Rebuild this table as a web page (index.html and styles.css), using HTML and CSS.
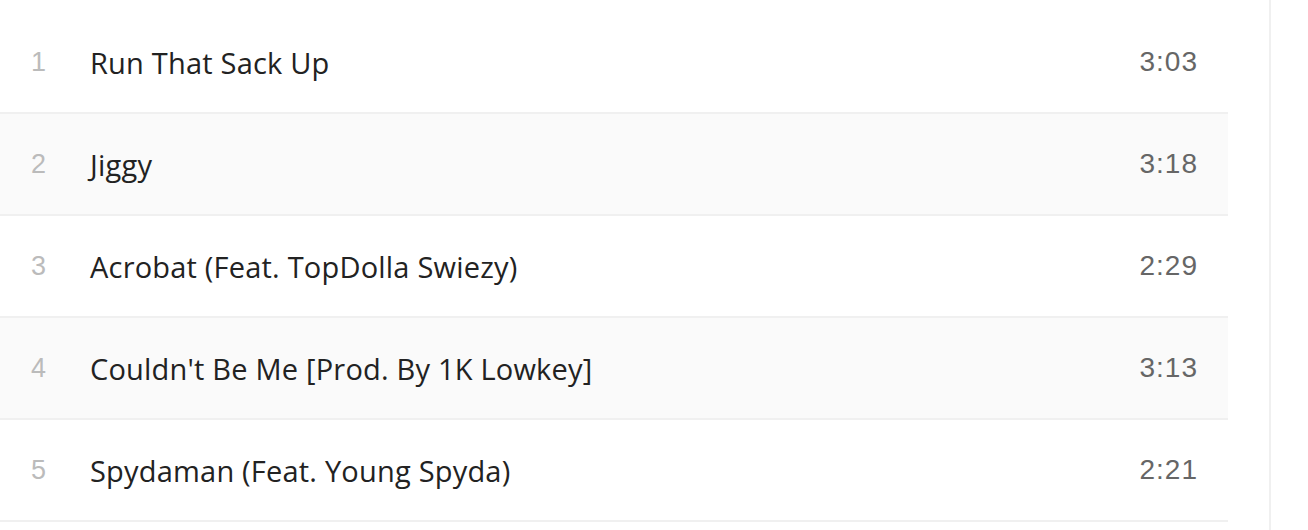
FILE: index.html
```html
<!DOCTYPE html>
<html>
<head>
<meta charset="utf-8">
<link rel="stylesheet" href="styles.css">
</head>
<body>
<div class="page">
  <ol class="tracks">
    <li class="track"><span class="num">1</span><span class="title">Run That Sack Up</span><span class="dur">3:03</span></li>
    <li class="track alt"><span class="num">2</span><span class="title">Jiggy</span><span class="dur">3:18</span></li>
    <li class="track"><span class="num">3</span><span class="title">Acrobat (Feat. TopDolla Swiezy)</span><span class="dur">2:29</span></li>
    <li class="track alt"><span class="num">4</span><span class="title">Couldn't Be Me [Prod. By 1K Lowkey]</span><span class="dur">3:13</span></li>
    <li class="track"><span class="num">5</span><span class="title">Spydaman (Feat. Young Spyda)</span><span class="dur">2:21</span></li>
  </ol>
</div>
</body>
</html>
```
FILE: styles.css
```css
html, body {
  margin: 0;
  padding: 0;
  background: #fff;
}
.page {
  width: 1269px;
  min-height: 530px;
  border-right: 2px solid #f0f0f0;
  padding-top: 12px;
  box-sizing: content-box;
}
.tracks {
  list-style: none;
  margin: 0;
  padding: 0;
  width: 1228px;
}
.track {
  display: flex;
  align-items: center;
  height: 100px;
  border-bottom: 2px solid #f0f0f0;
  background: #fff;
}
.track.alt {
  background: #fafafa;
}
.num {
  width: 77px;
  text-align: center;
  font-family: "Liberation Sans", Arial, sans-serif;
  font-size: 27px;
  color: #bbb;
}
.title {
  flex: 1;
  margin-left: 13px;
  font-family: "Open Sans", "Liberation Sans", sans-serif;
  font-size: 29px;
  letter-spacing: 0.2px;
  color: #222;
}
.dur {
  padding-right: 30px;
  font-family: "Liberation Sans", Arial, sans-serif;
  font-size: 28px;
  letter-spacing: 1px;
  color: #666;
}
```
